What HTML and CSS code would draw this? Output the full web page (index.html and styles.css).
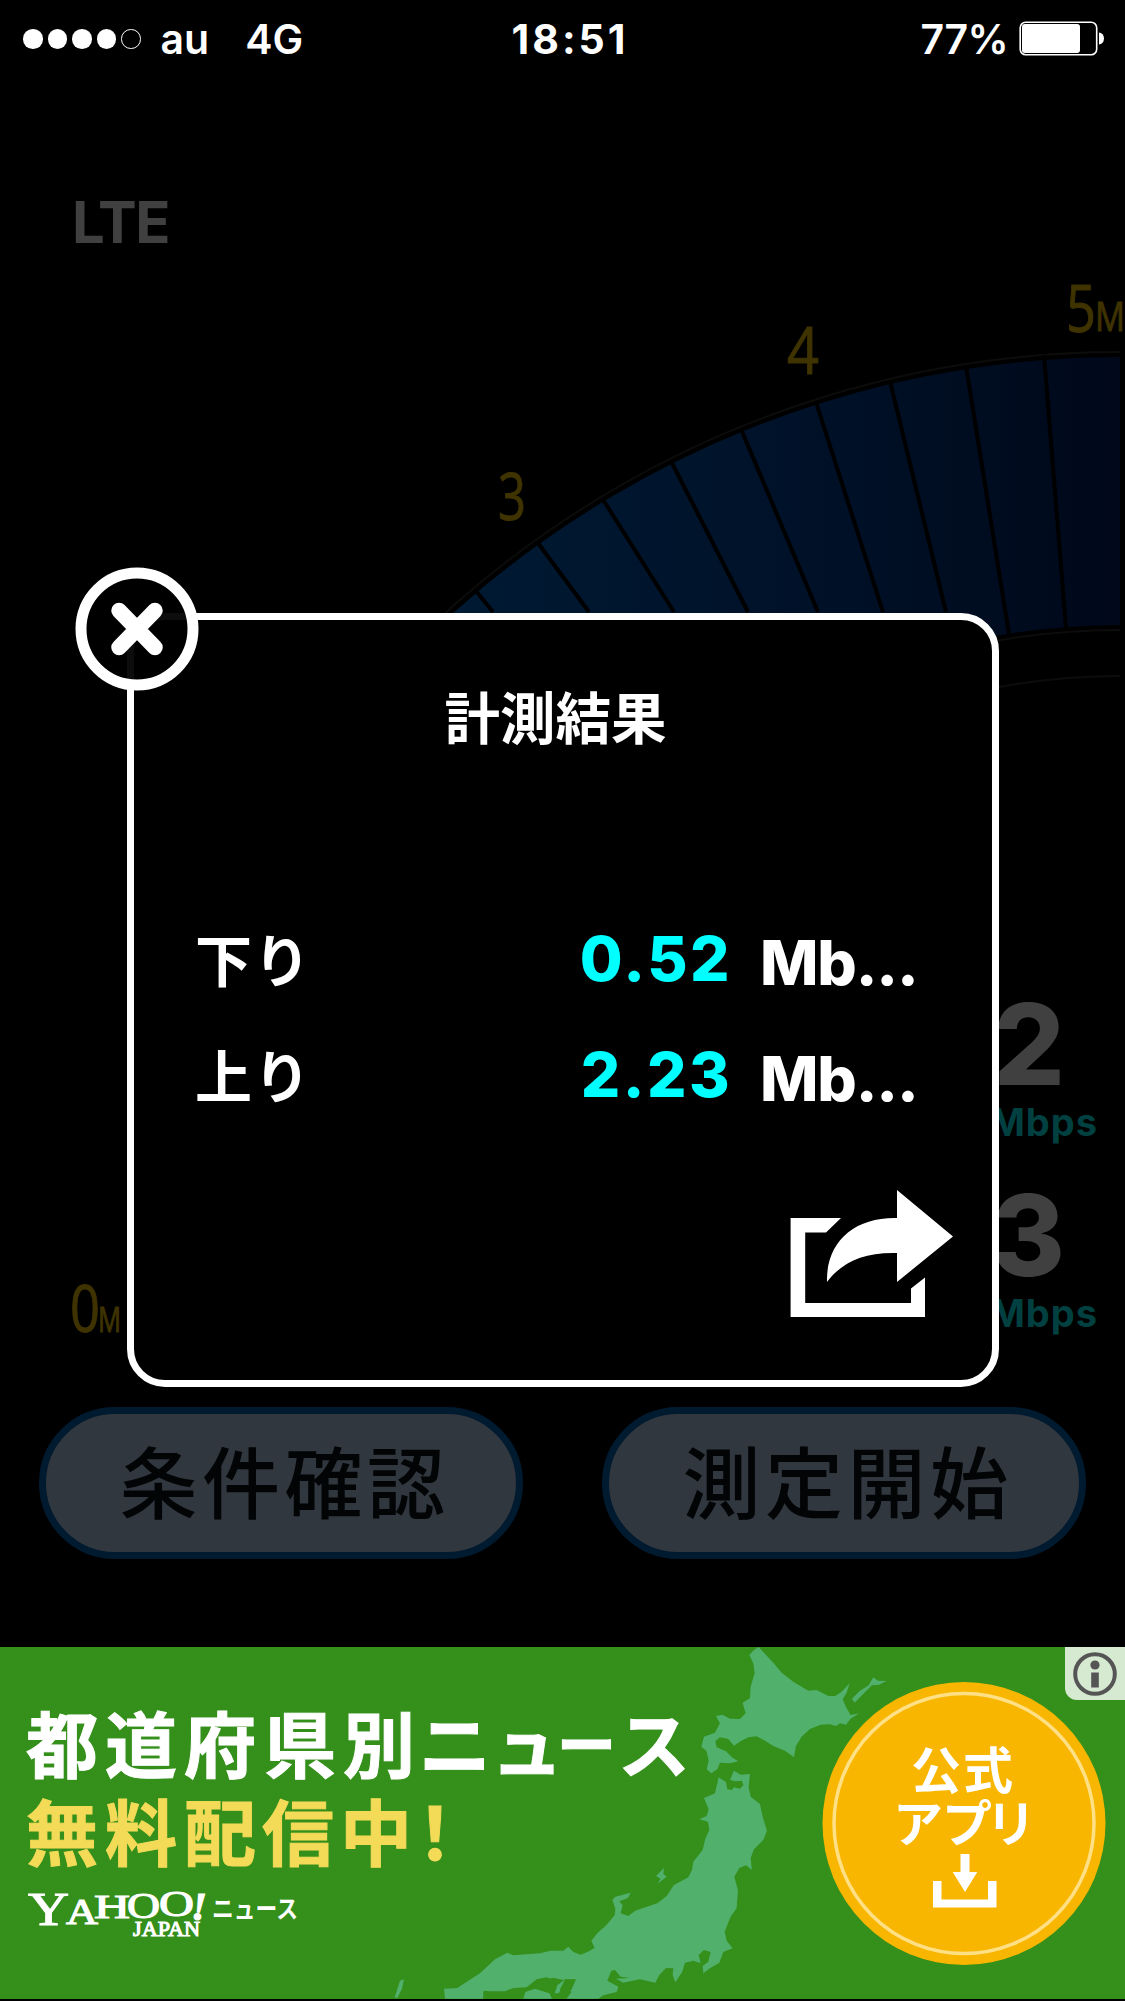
FILE: index.html
```
<!DOCTYPE html>
<html lang="ja">
  <head>
    <meta charset="utf-8">
    <title>計測結果</title>
    <link rel="stylesheet" href="styles.css">
  </head>
  <body>
    <div class="phone">
      <!-- ステータスバー -->
      <header class="status">
        <div class="status-left">
          <div class="signal"><i></i><i></i><i></i><i></i><i class="off"></i></div>
          <span class="carrier">au</span>
          <span>4G</span>
        </div>
        <span class="clock">18:51</span>
        <div class="status-right">
          <span>77%</span>
          <svg class="battery" width="86" height="36" viewBox="0 0 86 36">
            <rect x="1.2" y="1.2" width="76.5" height="32.5" rx="5.5" fill="none" stroke="#fff" stroke-width="1.6"/>
            <rect x="3" y="3" width="58" height="29" rx="3" fill="#fff"/>
            <path d="M80 11.5a5 6 0 0 1 0 12z" fill="#fff"/>
          </svg>
        </div>
      </header>

      <main class="app">
        <div class="network">LTE</div>

        <!-- 速度メーター -->
        <div class="meter">
          <svg class="gauge" width="1125" height="1130" viewBox="0 260 1125 1130">
            <defs>
              <linearGradient id="band" gradientUnits="userSpaceOnUse" x1="450" y1="0" x2="1121" y2="0">
                <stop offset="0" stop-color="#001a33"/>
                <stop offset=".5" stop-color="#001229"/>
                <stop offset="1" stop-color="#00081a"/>
              </linearGradient>
            </defs>
            <path d="M180 1021A999 999 0 0 1 1120 357V625A732 732 0 0 0 431.5 1110.5z" fill="url(#band)"/>
            <g fill="none" stroke="#0c0c0a" stroke-width="2">
              <path d="M175 1019A1004 1004 0 0 1 1120 352"/>
              <path d="M436 1112A727 727 0 0 1 1120 630"/>
              <path d="M480 1128A681 681 0 0 1 1120 676"/>
            </g>
            <g stroke="#000" stroke-width="4">
              <path d="M1044 355L1066 628M966 366L1009 634M890 381L946 612M816 402L883 612M741 429L818 612"/>
              <path d="M671 461L748 612M602 498L674 612M538 543L589 612M476 591L493 612"/>
            </g>
            <g class="scale">
              <text x="498" y="520" textLength="28" lengthAdjust="spacingAndGlyphs">3</text>
              <text x="787" y="374" textLength="32" lengthAdjust="spacingAndGlyphs">4</text>
              <text x="1066" y="332" textLength="30" lengthAdjust="spacingAndGlyphs">5</text>
              <text class="unit" x="1095" y="331" textLength="30" lengthAdjust="spacingAndGlyphs">M</text>
              <text x="70" y="1332" textLength="30" lengthAdjust="spacingAndGlyphs">0</text>
              <text class="unit small" x="98" y="1332" textLength="23" lengthAdjust="spacingAndGlyphs">M</text>
            </g>
          </svg>
          <div class="readouts">
            <div class="readout"><b>0.52</b><span>Mbps</span></div>
            <div class="readout"><b>2.23</b><span>Mbps</span></div>
          </div>
        </div>

        <div class="buttons">
          <button class="pill">条件確認</button>
          <button class="pill">測定開始</button>
        </div>
      </main>

      <!-- 広告 -->
      <aside class="ad">
        <svg width="1125" height="352" viewBox="0 0 1125 352">
          <g class="map" transform="translate(380 -7) scale(.3333)">
            <path d="M1108 45L1122 30L1136 21L1152 38L1180 68L1205 98L1240 125L1285 152L1310 150L1345 168L1366 168L1385 155L1409 130L1400 158L1388 178L1400 205L1412 225L1438 220L1412 236L1398 254L1380 250L1368 258L1350 253L1322 254L1290 267L1265 290L1248 318L1242 352L1215 332L1180 318L1155 302L1130 289L1105 292L1082 304L1062 317L1045 297L1020 292L1006 304L1010 322L1038 334L1056 352L1075 364L1050 370L1020 368L1012 388L994 400L980 388L986 362L980 334L964 320L972 290L1005 278L1020 250L1008 228L1028 224L1050 236L1080 237L1097 220L1088 188L1110 175L1112 140L1124 100L1120 70z"/>
            <path d="M1016 412L1038 426L1042 448L1056 450L1062 442L1080 446L1090 436L1086 422L1066 424L1050 420L1062 392L1082 404L1110 402L1106 440L1112 470L1140 492L1148 530L1161 572L1150 600L1122 628L1112 655L1116 690L1098 676L1078 684L1063 710L1074 750L1070 805L1052 830L1034 875L1040 902L1058 925L1030 936L1018 968L990 985L970 1000L968 978L985 965L992 936L972 930L956 945L962 970L940 962L915 968L907 995L886 1027L878 1005L880 985L858 984L838 1005L826 1028L780 1018L730 1028L708 1016L750 1014L722 1010L705 990L694 992L682 1022L715 1040L710 1056L670 1066L655 1076L560 1076L575 1055L558 1042L588 1020L560 1018L530 1024L500 1012L470 1018L440 1042L400 1044L375 1054L335 1054L310 1054L310 1076L195 1076L192 1046L232 1044L265 1022L300 1000L345 958L382 938L400 946L480 940L512 932L550 932L565 920L580 936L602 944L622 936L644 924L634 902L652 880L680 854L704 826L706 806L697 780L706 770L752 758L744 774L718 784L728 796L722 820L745 828L766 812L800 800L832 790L860 768L882 735L925 712L936 690L940 665L968 630L976 596L988 570L984 545L958 538L980 528L986 508L972 474L1005 460z"/>
            <path d="M310 1076L312 1052L325 1054L345 1072L380 1066L390 1076z" fill="#348f1b"/>
            <path d="M430 1076L436 1056L465 1046L508 1060L516 1076z"/>
            <path d="M448 1048L485 1022L520 1013L560 1022L540 1040L524 1058L500 1052L470 1044z" fill="#348f1b"/>
            <path d="M524 1060L532 1036L556 1018L550 1036L536 1060z"/>
            <path d="M556 1018L588 1018L574 1050L545 1056L540 1048z" fill="#348f1b"/>
            <path d="M60 1022L72 1018L66 1046L52 1074L44 1072z"/>
            <path d="M828 708L852 684L850 702L860 710L832 732L842 716z"/>
            <path d="M1416 176L1440 152L1466 136L1480 112L1494 122L1520 123L1498 134L1476 136L1452 160L1424 188z"/>
          </g>
          <text class="head" x="26 105 184 264 343 419 491" y="125">都道府県別ニュ</text>
          <text class="head bar" x="557" y="120">ー</text>
          <text class="head" x="618" y="125">ス</text>
          <text class="head yellow" x="26 105 184 262 340 399" y="213">無料配信中！</text>
          <g class="yahoo">
            <text x="28" y="278" font-size="47" textLength="41" lengthAdjust="spacingAndGlyphs">Y</text>
            <text x="66" y="277" font-size="35" textLength="32" lengthAdjust="spacingAndGlyphs">A</text>
            <text x="94" y="271" font-size="34" textLength="36" lengthAdjust="spacingAndGlyphs">H</text>
            <text x="127" y="271" font-size="35" textLength="33" lengthAdjust="spacingAndGlyphs">O</text>
            <text x="159" y="269" font-size="36" textLength="35" lengthAdjust="spacingAndGlyphs">O</text>
            <text x="191" y="273" font-size="41" font-style="italic" font-weight="700">!</text>
            <text x="133" y="289" font-size="21" textLength="67" lengthAdjust="spacingAndGlyphs">JAPAN</text>
          </g>
          <text class="news" x="212" y="271" textLength="86" lengthAdjust="spacingAndGlyphs">ニュース</text>

          <circle cx="964" cy="176.5" r="141.5" fill="#f9b600"/>
          <circle cx="964" cy="176.5" r="130" fill="none" stroke="#ffe085" stroke-width="3.5"/>
          <text class="app-text" x="911 963" y="142">公式</text>
          <text class="app-text" x="893 942 986" y="195">アプリ</text>
          <path d="M960.5 207H969.5V225H977.3L965 245L952.7 225H960.5zM933 234H941.5V252.5H988V234H996.5V260.5H933z" fill="#fff"/>

          <path d="M1065 0H1125V53H1077A12 12 0 0 1 1065 41z" fill="#d6e9d1"/>
          <circle cx="1095" cy="27" r="19.8" fill="none" stroke="#555" stroke-width="4"/>
          <circle cx="1095" cy="18" r="4.6" fill="#555"/>
          <path d="M1091.2 25.5h7.6v15h-7.6z" fill="#555"/>
        </svg>
      </aside>

      <!-- 計測結果ダイアログ -->
      <section class="dialog">
        <h1>計測結果</h1>
        <dl>
          <dt>下り</dt><dd class="value">0.52</dd><dd class="mbps">Mb...</dd>
          <dt>上り</dt><dd class="value">2.23</dd><dd class="mbps">Mb...</dd>
        </dl>
        <svg class="share" width="164" height="127" viewBox="790 1190 164 127">
          <path d="M790.6 1218H841L826 1232.5H805.2V1303H911V1288.6L925 1277.6V1317H790.6z" fill="#fff"/>
          <path d="M897 1190L953 1236.5L897 1282V1253C864 1252 842 1262 827 1282C826 1241 855 1217 897 1218z" fill="#fff"/>
        </svg>
        <svg class="close" width="132" height="132" viewBox="-66 -66 132 132">
          <circle r="56" fill="#000" fill-opacity=".95" stroke="#fff" stroke-width="11"/>
          <path d="M-18-18.5L18 18.5M18-18.5L-18 18.5" stroke="#fff" stroke-width="15.5" stroke-linecap="round"/>
        </svg>
      </section>
    </div>
  </body>
</html>
```

FILE: styles.css
```
*{
  margin: 0;
  padding: 0;
  box-sizing: border-box;
}
body{
  background: #000;
  color: #fff;
  font-family: Inter, "Noto Sans CJK JP", sans-serif;
}
.phone{
  position: relative;
  width: 1125px;
  height: 2001px;
  overflow: hidden;
  background: #000;
}

/* ステータスバー */
.status{
  display: grid;
  grid-template-columns: 1fr auto 1fr;
  align-items: center;
  height: 78px;
  padding: 0 20px 0 23px;
  font-size: 41px;
  line-height: 78px;
  font-weight: 600;
}
.status-left,.status-right{
  display: flex;
  align-items: center;
}
.status-right{
  justify-content: flex-end;
  gap: 11px;
  letter-spacing: -.6px;
}
.signal{
  display: flex;
  gap: 5px;
  margin-right: 20px;
}
.signal i{
  width: 19.5px;
  height: 19.5px;
  border-radius: 50%;
  background: #fff;
}
.signal .off{
  background: none;
  border: 1.5px solid #fff;
}
.carrier{
  margin-right: 36px;
}
.clock{
  padding-left: 12px;
  font-weight: 700;
  letter-spacing: 3px;
}

/* 計測画面 */
.network{
  height: 182px;
  padding: 109px 0 0 72px;
  color: #404040;
  font-size: 58px;
  line-height: 70px;
  font-weight: 700;
  letter-spacing: -1.5px;
}
.meter{
  display: grid;
}
.gauge,.readouts{
  grid-area: 1 / 1;
}
.gauge{
  display: block;
}
.scale{
  fill: #3f3300;
  stroke: #3f3300;
  stroke-width: 1px;
  font-family: "Open Sans", "Noto Sans", sans-serif;
  font-size: 66px;
}
.unit{
  font-size: 41px;
}
.small{
  font-size: 35px;
}
.readouts{
  padding: 729px 27px 0 0;
  text-align: right;
}
.readout{
  height: 191px;
}
.readout b{
  display: block;
  padding-right: 33px;
  color: #404040;
  font-size: 112px;
  line-height: 110px;
  font-weight: 800;
}
.readout span{
  display: block;
  color: #004040;
  font-size: 38px;
  line-height: 46px;
  font-weight: 700;
  letter-spacing: 1px;
}
.buttons{
  display: flex;
  gap: 79px;
  padding: 17px 0 0 39px;
}
.pill{
  width: 484px;
  height: 152px;
  padding: 0 0 8px 7px;
  border: 7px solid #001a30;
  border-radius: 76px;
  background: #30373e;
  color: #020405;
  font-family: "Noto Sans CJK JP", sans-serif;
  font-size: 78px;
  line-height: 130px;
  font-weight: 500;
  letter-spacing: 4.5px;
}

/* 広告 */
.ad{
  height: 352px;
  margin-top: 88px;
  background: #348f1b;
}
.ad svg{
  display: block;
}
.map{
  fill: #51b06c;
}
.head,.app-text,.news{
  fill: #fff;
  font-family: "Noto Sans CJK JP", sans-serif;
  font-weight: 700;
}
.head{
  font-size: 72px;
  stroke: #fff;
  stroke-width: 1px;
}
.bar{
  font-size: 59px;
}
.yellow{
  fill: #f3db58;
  stroke: #f3db58;
}
.app-text{
  font-size: 50px;
}
.news{
  font-size: 25px;
}
.yahoo{
  fill: #fff;
  font-family: "Liberation Serif", serif;
  stroke: #fff;
  stroke-width: 1.1px;
}

/* 計測結果ダイアログ */
.dialog{
  position: absolute;
  left: 127px;
  top: 613px;
  width: 872px;
  height: 774px;
  border: 7px solid #fff;
  border-radius: 38px;
  background: #000;
}
.dialog h1{
  margin-top: 53px;
  padding-right: 15px;
  text-align: center;
  font-family: "Noto Sans CJK JP", sans-serif;
  font-size: 55.5px;
  line-height: 84px;
  font-weight: 700;
}
.dialog dl{
  display: grid;
  grid-template-columns: 300px 238px 1fr;
  grid-auto-rows: 116px;
  margin-top: 157px;
  padding-left: 60px;
  line-height: 90px;
}
.dialog dt{
  padding-left: 1px;
  font-family: "Noto Sans CJK JP", sans-serif;
  font-size: 57px;
  line-height: 86px;
  font-weight: 700;
  letter-spacing: 1.5px;
}
.value{
  color: #0ff;
  text-align: right;
  font-size: 62px;
  font-weight: 800;
  letter-spacing: 2.4px;
}
.mbps{
  padding: 4px 0 0 28px;
  font-size: 62px;
  font-weight: 800;
  letter-spacing: -1.2px;
}
.share{
  position: absolute;
  left: 656px;
  top: 570px;
}
.close{
  position: absolute;
  left: -63px;
  top: -57px;
}
```
